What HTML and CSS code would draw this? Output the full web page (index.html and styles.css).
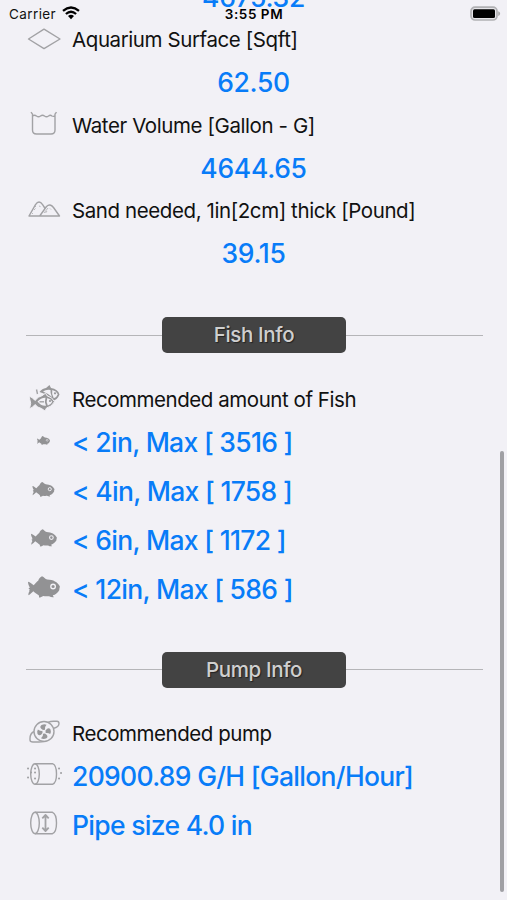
FILE: index.html
```html
<!DOCTYPE html>
<html lang="en">
<head>
<meta charset="utf-8">
<title>Aquarium Calculator</title>
<link rel="stylesheet" href="styles.css">
</head>
<body>
<svg class="defs" width="0" height="0" aria-hidden="true">
  <symbol id="fish" viewBox="0 0 31 21">
    <path fill="#929294" d="M0 5.500c2 .3 4 2.300 5.500 3.300C7 7.500 8.500 5.500 10 4.300C10.300 2.500 12 .8 13.600 0c2 .8 3 2.500 5 3.300c6 .2 10 2.500 12.200 6.500c.3 1.200-.8 2.200-.4 3.500c-1.600 2.800-3.800 4.500-6.400 5.200c.3.700.7 1.200 1 1.900c-1.700.2-3.200-.2-4.600-1c-1.800.3-4 .2-5.600-.2c-1.300.9-2.600 1.400-4.200 1.500c.2-.9.100-1.500-.2-2.300c-2-1.200-4-2.900-5.300-3.900C4 15.500 2.200 17.600.4 18.400c-.2-1.700.6-3 1.300-4.200l-.8-.5l.9-1l-1.400-.8l1.400-.9C.8 9.500 0 7.500 0 5.500z"/>
    <circle cx="24.300" cy="10" r="2.200" fill="#929294" stroke="#f2f1f6" stroke-width="1.300"/>
  </symbol>
</svg>
<header class="status">
  <span class="carrier">Carrier
    <svg width="18" height="14" viewBox="0 0 18 14"><g fill="none" stroke="#000" stroke-width="2.300"><path d="M1 4.800Q9-1.800 17 4.800"/><path d="M3.900 8Q9 3.600 14.100 8"/></g><path d="M6 10Q9 7.600 12 10L9 13.200z"/></svg>
  </span>
  <span class="time">3:55 PM</span>
  <svg class="battery" width="31" height="16" viewBox="0 0 31 16"><rect x="1" y="1.200" width="26" height="12.800" rx="4" fill="#e6e5e9" stroke="#b1b1b4" stroke-width="1.700"/><rect x="3" y="3.200" width="22" height="8.800" rx="1.500"/><path d="M28.200 5.200c2.600 1 2.600 3.800 0 4.800z" fill="#aaa"/></svg>
</header>
<main class="content">
  <p class="total first">4675.32</p>
  <section class="row label">
    <svg class="icon" viewBox="0 0 36 30"><path d="M2.500 14L18 4.200L34 14L18 23.600z"/></svg>
    <span>Aquarium Surface [Sqft]</span>
  </section>
  <p class="total">62.50</p>
  <section class="row label">
    <svg class="icon" viewBox="0 0 36 30"><path d="M5 2.200l1.500 2V20q0 4 4 4H25q4 0 4-4V4.200l1.500-2M6.500 6q2-1.500 4 0q2 1.400 4 0q2-1.400 4 0q2 1.400 4 0q1.800-1.400 3.400 0q1.500.8 3.100 0"/></svg>
    <span>Water Volume [Gallon - G]</span>
  </section>
  <p class="total">4644.65</p>
  <section class="row label">
    <svg class="icon" viewBox="0 0 36 30"><path d="M3 20L9.500 8.600Q13 3.300 16.600 8.600L18.800 12M3 20H33.500L27.500 11.500Q24 7 20.500 10.500L13.700 20z"/><path class="fine" d="M9 11l1-1m-2 4l1.500-1.500M6 18l1-1m6-7l1.500.6M22 12l-4 5m6-4.500l1 1m-4 1.500l-1.500 2"/></svg>
    <span>Sand needed, 1in[2cm] thick [Pound]</span>
  </section>
  <p class="total">39.15</p>

  <h2 class="divider"><span>Fish Info</span></h2>
  <section class="row label lead">
    <svg class="icon" viewBox="0 0 36 30">
      <path class="solid" d="M13.500 8Q16 4.500 20 4L23.500 1l1.500 3Q32 5 33.500 10.500Q31.500 16 26 17l-1.500-3Q21 10 13.500 8z"/>
      <path class="pale" d="M17 7.500Q20 5.300 24.500 6Q24 9 26 13Q22 9.500 17 7.500z"/>
      <path class="pale" d="M26.300 6q4 1 5.500 4.200q-1.200 3.300-4 4q-2.500-4-1.500-8.200z"/>
      <circle class="solid" cx="29" cy="9.300" r="1.100"/>
      <path d="M10.500 5.500l1 4.500"/>
      <path class="solid rim" d="M3 12q4 1.500 6 4.500q3-4 7-4.800l3.500-2.500l1.500 2.500q5.500 1.500 7.500 6q-3 5.500-8 6.300l-1.500 3l-3.500-2.500q-4-.8-6.500-4Q7 23.500 3.500 24.800l1.200-5.500z"/>
      <path class="pale" d="M11.500 17.500q3.500-4 8-3.800q-1.500 4 .5 8q-5 .5-8.500-4.200z"/>
      <path class="pale" d="M21.300 14q3.500 1 5 3.700q-1.500 3-4.500 3.900q-2-3.800-.5-7.600z"/>
      <circle class="solid" cx="24" cy="17" r="1.100"/>
      <path d="M13.500 17.800H18"/>
    </svg>
    <span>Recommended amount of Fish</span>
  </section>
  <section class="row value"><svg class="fish f1"><use href="#fish"/></svg><span>&lt; 2in, Max [ 3516 ]</span></section>
  <section class="row value"><svg class="fish f2"><use href="#fish"/></svg><span>&lt; 4in, Max [ 1758 ]</span></section>
  <section class="row value"><svg class="fish f3"><use href="#fish"/></svg><span>&lt; 6in, Max [ 1172 ]</span></section>
  <section class="row value"><svg class="fish f4"><use href="#fish"/></svg><span>&lt; 12in, Max [ 586 ]</span></section>

  <h2 class="divider second"><span>Pump Info</span></h2>
  <section class="row label lead">
    <svg class="icon" viewBox="0 0 36 30"><circle cx="18" cy="13.500" r="10"/><path d="M22 4.300Q25 3 29 3.300H31q2 0 2 2.300q0 3.400-5 4.700M8 13.500Q4 15.500 4 20.500v1.500q0 2 3 2h6q3 0 5-.6"/><path class="solid" d="M17 12Q12.500 9.500 15.500 7q3-1.500 5-.3q-2 2-1.500 5zM19.500 12.500q3-4 5-1q1 3-.3 4.500q-2-1.500-4.500-1zM19 15.500q4 2.500 1.500 4.800q-3 1.300-5.500 0q2.500-2 2-4.500zM16.500 15q-2.500 4-5 1q-.8-3 .4-4.500q2 1.800 4.500 1.300z"/></svg>
    <span>Recommended pump</span>
  </section>
  <section class="row value">
    <svg class="icon" viewBox="0 0 36 30"><ellipse cx="9" cy="14" rx="4.300" ry="10.300"/><path d="M9 3.700H26.500Q30.500 5 30.500 14T26.500 24.300H9"/><path class="dots" d="M2 8.500h.1M2 17.500h.1M5 12.500h.1M9 8.500h.1M9 12.500h.1M9 18.500h.1M33 8.500h.1M35 13h.1M33 18.500h.1"/></svg>
    <span>20900.89 G/H [Gallon/Hour]</span>
  </section>
  <section class="row value">
    <svg class="icon" viewBox="0 0 36 30"><ellipse cx="9" cy="14" rx="4.300" ry="10.700"/><path d="M9 3.300H26.500Q30.500 5 30.500 14T26.500 24.700H9"/><path class="arrow" d="M19.500 7v14M16.300 9.300L19.500 6l3.200 3.300M16.300 18.700l3.200 3.300l3.200-3.300"/></svg>
    <span>Pipe size 4.0 in</span>
  </section>
</main>
<div class="scrollbar"></div>
</body>
</html>
```

FILE: styles.css
```css
* { box-sizing: border-box; }
html, body { height: 100%; }
body {
  margin: 0;
  position: relative;
  overflow: hidden;
  background: #f2f1f6;
  color: #111;
  font-family: Inter, "Liberation Sans", sans-serif;
}
.defs { position: absolute; }
.status {
  position: absolute;
  inset: 0 0 auto;
  z-index: 1;
  height: 28px;
  padding: 0 6px 0 9px;
  display: grid;
  grid-template-columns: 1fr auto 1fr;
  align-items: center;
  font-size: 13px;
}
.carrier { display: flex; align-items: center; gap: 6px; font-size: 13.500px; letter-spacing: .4px; }
.carrier svg { margin-top: -2px; }
.time { font-size: 13.500px; font-weight: 600; color: #000; letter-spacing: .55px; margin-left: -2px; }
.battery { justify-self: end; margin-top: -1px; }
.content { margin-top: -24.500px; padding-left: 25.500px; }
.content p, .content h2 { margin: 0; }
.content .total {
  height: 42.750px;
  line-height: 42.750px;
  margin-left: -25.500px;
  text-align: center;
  font-size: 26.500px;
  font-weight: 500;
  color: #087cf8;
  letter-spacing: -.3px;
}
.row { display: grid; grid-template-columns: 36px 1fr; column-gap: 10.500px; align-items: center; }
.row span { justify-self: start; white-space: nowrap; }
.label { height: 42.750px; font-size: 20.500px; letter-spacing: -.41px; }
.lead { margin-bottom: -3.500px; letter-spacing: -.45px; }
.value { height: 49px; font-size: 26.500px; font-weight: 500; color: #087cf8; letter-spacing: -.7px; }
.icon { width: 36px; height: 30px; fill: none; stroke: #a2a2a5; stroke-width: 1.400; stroke-linejoin: round; overflow: visible; }
.icon .fine { stroke-width: .7; }
.icon .solid { fill: #98989a; stroke: none; }
.icon .rim { stroke: #f2f1f6; stroke-width: 1; }
.icon .pale { fill: #f2f1f6; stroke: none; }
.icon .dots { stroke-width: 2; stroke-linecap: round; }
.icon .arrow { stroke-width: 1.800; }
.value .icon { margin-top: -2px; }
.fish { justify-self: center; margin-top: -3px; }
.f1 { width: 13px; height: 9px; }
.f2 { width: 23px; height: 15px; }
.f3 { width: 26px; height: 18px; }
.f4 { width: 32px; height: 22px; }
.divider {
  display: flex;
  align-items: center;
  width: 457px;
  height: 36px;
  font-size: 20.500px;
  font-weight: 500;
  letter-spacing: -.35px;
}
.content .divider { margin: 42.500px 0 24.500px; }
.content .divider.second { margin-top: 38.500px; }
.divider::before, .divider::after { content: ""; flex: 1; height: 1px; background: #b5b5b8; }
.divider span {
  width: 183.500px;
  height: 36px;
  line-height: 36px;
  text-align: center;
  border-radius: 5px;
  background: #434343;
  color: #cfcfcf;
  text-shadow: 1px 1px 1px #222;
}
.scrollbar { position: absolute; right: 3px; top: 451px; width: 4px; height: 441px; border-radius: 2px; background: #a0a0a4; }
```
